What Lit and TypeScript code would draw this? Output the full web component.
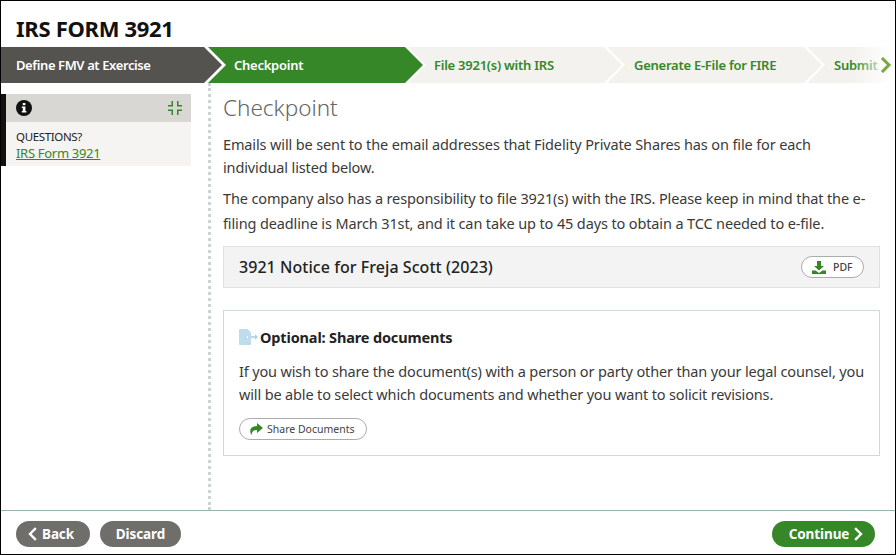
import { LitElement, html, css, svg } from "lit";
import { customElement } from "lit/decorators.js";

const chev = (d: string, w = "2.4") => svg`<path d=${d} fill="none" stroke="currentColor" stroke-width=${w} stroke-linecap="square" stroke-linejoin="miter"/>`;

@customElement("app-root")
export class AppRoot extends LitElement {
  static styles = css`
    :host { display: block; width: 896px; height: 555px; box-sizing: border-box; border: 1px solid #000; background: #fff; font-family: "Noto Sans", "Liberation Sans", sans-serif; color: #333; overflow: hidden; }
    .frame { display: flex; flex-direction: column; height: 553px; }
    h1 { margin: 0; height: 46px; box-sizing: border-box; padding: 12px 0 0 15px; font-size: 22px; line-height: 30px; font-weight: 700; color: #111; letter-spacing: -0.3px; }
    .steps { display: flex; height: 36px; position: relative; overflow: hidden; flex: none; }
    .step { flex: none; height: 36px; box-sizing: border-box; padding-left: 26px; display: flex; align-items: center; font-size: 13px; font-weight: 600; letter-spacing: -0.25px; white-space: nowrap; margin-left: -15px; background: #f3f2ee; color: #368727; clip-path: polygon(0 0, calc(100% - 18px) 0, 100% 50%, calc(100% - 18px) 100%, 0 100%, 18px 50%); }
    .s1 { width: 221px; margin-left: 0; padding-left: 15px; background: #55534f; color: #fff; letter-spacing: -0.4px; clip-path: polygon(0 0, calc(100% - 18px) 0, 100% 50%, calc(100% - 18px) 100%, 0 100%); }
    .s2 { width: 215px; margin-left: -14px; background: #368727; color: #fff; }
    .s3 { width: 214px; }
    .s4 { width: 215px; padding-left: 27px; }
    .s5 { width: 215px; padding-left: 27px; }
    .fade { position: absolute; right: 0; top: 0; width: 42px; height: 36px; background: linear-gradient(90deg, rgba(255,255,255,0), #fff 90%); }
    .more { position: absolute; right: 3px; top: 10px; width: 12px; height: 16px; color: #7aa83f; }
    .body { flex: 1; display: flex; min-height: 0; }
    .side { width: 190px; flex: none; padding-top: 11px; }
    .panel { border-left: 5px solid #111; }
    .panel-head { height: 28px; background: #d8d7d3; display: flex; align-items: center; justify-content: space-between; padding: 0 9px 0 10px; }
    .panel-body { height: 44px; box-sizing: border-box; background: #f5f4f2; padding: 6px 10px 0; font-size: 11.5px; line-height: 17px; color: #222; letter-spacing: -0.35px; }
    .panel-body a { display: block; color: #368727; text-decoration: underline; font-size: 13px; letter-spacing: -0.3px; }
    .main { flex: 1; margin-left: 17px; border-left: 3px dotted #c9d6d3; padding: 9px 15px 0 12px; min-width: 0; }
    h2 { margin: 0; font-size: 22.5px; line-height: 32px; font-weight: 300; color: #666; }
    p { margin: 0; font-size: 14.5px; line-height: 23px; letter-spacing: -0.13px; color: #3a3a3a; }
    .p1 { margin-top: 9px; max-width: 648px; }
    .p2 { margin-top: 7px; max-width: 648px; line-height: 25px; }
    .notice { margin-top: 10px; height: 42px; box-sizing: border-box; background: #f3f3f3; border: 1px solid #e0e2e0; display: flex; align-items: center; justify-content: space-between; padding: 0 15px; font-size: 16px; font-weight: 500; color: #222; letter-spacing: 0.05px; }
    .pill { display: inline-flex; align-items: center; box-sizing: border-box; height: 22px; border: 1px solid #a9aeab; border-radius: 11px; background: #fff; font-size: 10.5px; color: #444; letter-spacing: 0; }
    .pdf { width: 63px; padding-left: 10px; gap: 7px; }
    .share-btn { width: 128px; padding-left: 9px; gap: 4px; margin-top: 12px; }
    .card { margin-top: 22px; height: 146px; box-sizing: border-box; border: 1px solid #ccdbdb; padding: 14px 10px 0 15px; }
    .card p { letter-spacing: -0.15px; }
    h3 { margin: 0 0 11px; display: flex; align-items: center; gap: 2px; font-size: 14.5px; line-height: 24px; font-weight: 700; color: #222; letter-spacing: -0.15px; }
    .foot { flex: none; height: 44px; border-top: 1px solid #9db3ad; display: flex; align-items: flex-start; padding: 10px 20px 0 15px; gap: 10px; box-sizing: border-box; }
    .btn { height: 26px; border-radius: 13px; background: #706e6a; color: #fff; display: inline-flex; align-items: center; justify-content: center; font-size: 13.5px; font-weight: 700; letter-spacing: -0.1px; box-sizing: border-box; gap: 5px; }
    .back { width: 74px; padding-right: 4px; }
    .discard { width: 81px; }
    .cont { width: 103px; margin-left: auto; background: #368727; padding-left: 5px; }
    svg { display: block; flex: none; }
  `;

  render() {
    return html`<div class="frame">
      <h1>IRS FORM 3921</h1>
      <div class="steps">
        <div class="step s1">Define FMV at Exercise</div>
        <div class="step s2">Checkpoint</div>
        <div class="step s3">File 3921(s) with IRS</div>
        <div class="step s4">Generate E-File for FIRE</div>
        <div class="step s5">Submit</div>
        <div class="fade"></div>
        <svg class="more" viewBox="0 0 12 16">${chev("M3 2l6 6-6 6", "3")}</svg>
      </div>
      <div class="body">
        <div class="side">
          <div class="panel">
            <div class="panel-head">
              <svg width="16" height="16" viewBox="0 0 16 16"><circle cx="8" cy="8" r="8" fill="#111"/><rect x="6.8" y="3" width="2.6" height="2.2" fill="#fff"/><path d="M5.8 6.4h3.6v4.6h1v1.6H5.8V11h1V8h-1z" fill="#fff"/></svg>
              <svg width="14" height="14" viewBox="0 0 14 14" fill="#368727"><path d="M3.5 0H5v5.5H0V4h3.5zM9 0h1.5v4H14v1.5H9zM0 8.5h5V14H3.5v-4H0zM9 8.5h5V10h-3.5v4H9z"/></svg>
            </div>
            <div class="panel-body">QUESTIONS?<a>IRS Form 3921</a></div>
          </div>
        </div>
        <div class="main">
          <h2>Checkpoint</h2>
          <p class="p1">Emails will be sent to the email addresses that Fidelity Private Shares has on file for each individual listed below.</p>
          <p class="p2">The company also has a responsibility to file 3921(s) with the IRS. Please keep in mind that the e-filing deadline is March 31st, and it can take up to 45 days to obtain a TCC needed to e-file.</p>
          <div class="notice">3921 Notice for Freja Scott (2023)
            <span class="pill pdf"><svg width="14" height="13" viewBox="0 0 14 13" fill="#368727"><path d="M5 0h4v5h3L7 9.5 2 5h3zM0 9.5h3.5L7 12l3.5-2.5H14V13H0z"/></svg>PDF</span>
          </div>
          <div class="card">
            <h3><svg width="19" height="16" viewBox="0 0 19 16"><path d="M1 0h7.500L12 3.500V7H8v2h4v6a1 1 0 0 1-1 1H1a1 1 0 0 1-1-1V1a1 1 0 0 1 1-1z" fill="#bfdcec"/><path d="M9 7.300h7V5.300L19 8l-3 2.700V8.700H9z" fill="#a9d0e4"/></svg>Optional: Share documents</h3>
            <p>If you wish to share the document(s) with a person or party other than your legal counsel, you will be able to select which documents and whether you want to solicit revisions.</p>
            <span class="pill share-btn"><svg width="14" height="12" viewBox="0 0 14 12" fill="#368727"><path d="M8 0l6 5-6 5V7C5 7 3 8 2.500 12 0 8 1 3.500 8 3z"/></svg>Share Documents</span>
          </div>
        </div>
      </div>
      <div class="foot">
        <span class="btn back"><svg width="9" height="14" viewBox="0 0 9 14">${chev("M7 2L2 7l5 5")}</svg>Back</span>
        <span class="btn discard">Discard</span>
        <span class="btn cont">Continue<svg width="9" height="14" viewBox="0 0 9 14">${chev("M2 2l5 5-5 5")}</svg></span>
      </div>
    </div>`;
  }
}
